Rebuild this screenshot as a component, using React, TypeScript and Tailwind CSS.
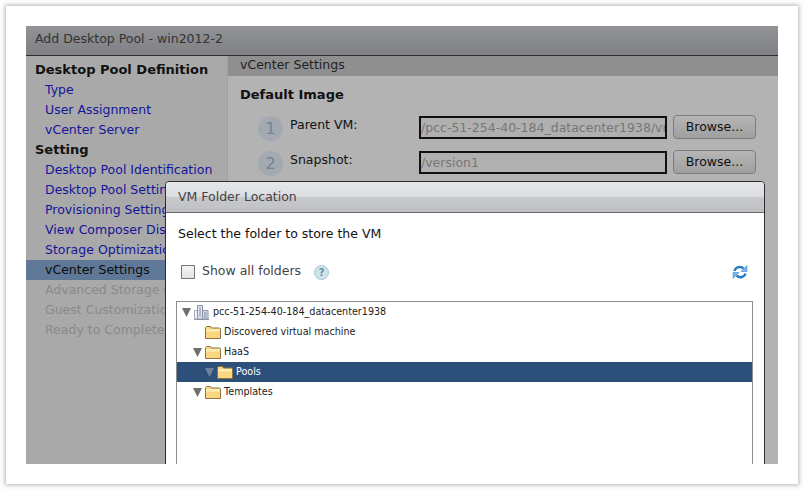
const FONT = "font-['DejaVu_Sans',sans-serif]";

const links = [
	{ label: "Type", kind: "link" },
	{ label: "User Assignment", kind: "link" },
	{ label: "vCenter Server", kind: "link" },
	{ label: "Setting", kind: "head" },
	{ label: "Desktop Pool Identification", kind: "link" },
	{ label: "Desktop Pool Settings", kind: "link" },
	{ label: "Provisioning Settings", kind: "link" },
	{ label: "View Composer Disks", kind: "link" },
	{ label: "Storage Optimization", kind: "link" },
	{ label: "vCenter Settings", kind: "active" },
	{ label: "Advanced Storage Options", kind: "off" },
	{ label: "Guest Customization", kind: "off" },
	{ label: "Ready to Complete", kind: "off" },
];

const Step = ({ n }: { n: number }) => (
	<div className="w-[25px] h-[25px] rounded-full bg-[#a2a9b0] text-[#74818e] text-[16px] flex items-center justify-center shrink-0">
		{n}
	</div>
);

const Field = ({ n, label, value }: { n: number; label: string; value: string }) => (
	<div className="flex items-start h-[25px]">
		<div className="ml-[30px]">
			<Step n={n} />
		</div>
		<div className="ml-[7px] w-[129px] text-[12.5px] text-[#111] leading-[18px] whitespace-nowrap">{label}</div>
		<div className="w-[248px] h-[23px] border-2 border-[#111] bg-[#b0b0b0] text-[12.5px] text-[#777] leading-[20px] overflow-hidden whitespace-nowrap">
			{value}
		</div>
		<button className="ml-[6px] w-[83px] h-[24px] rounded-[4px] border border-[#7c7c7c] bg-gradient-to-b from-[#b6b6b6] to-[#9f9f9f] text-[12.5px] text-[#111] leading-[20px] -mt-[1px]">
			Browse...
		</button>
	</div>
);

const Folder = () => (
	<svg width="16" height="13" viewBox="0 0 16 13" className="shrink-0">
		<path d="M.5 12.500V1.500l1-1h4l1 1.500h8l1 1v9.500z" fill="#fbd67f" stroke="#8a7440" />
		<path d="M1 3h14v2.500H1z" fill="#fdebb8" />
	</svg>
);

const Arrow = ({ dim }: { dim?: boolean }) => (
	<svg width="9" height="9" viewBox="0 0 9 9" className="shrink-0">
		<path d="M0 0h9L4.500 9z" fill={dim ? "#6f8299" : "#6e6e6e"} />
	</svg>
);

const Building = () => (
	<svg width="15" height="15" viewBox="0 0 15 15" className="shrink-0">
		<path d="M0 14.500h15" stroke="#8a94a6" />
		<path d="M.5 14V5.500h3V14z" fill="#eef0f5" stroke="#a3abbb" />
		<path d="M3.500 14V.5h5V14z" fill="#e4e7ef" stroke="#8a94a6" />
		<path d="M8.500 14V5.500h5.500V14z" fill="#d4d8e4" stroke="#8a94a6" />
		<path d="M5 3h2M5 5h2M5 7h2M5 9h2M5 11h2M10 8h2.500M10 10h2.500M10 12h2.500" stroke="#8088a0" />
	</svg>
);

const Refresh = () => (
	<svg width="16" height="16" viewBox="0 0 16 16" fill="none">
		<path d="M2.500 7C3.500 3 8.500 1.500 11.500 4.500" stroke="#2b7bc6" strokeWidth="2.500" />
		<path d="M15 1.500v6H9z" fill="#79b4ea" stroke="#2b7bc6" strokeWidth=".5" />
		<path d="M13.500 9.500C12.500 13 7.500 14.500 4.500 11.500" stroke="#2b7bc6" strokeWidth="2.500" />
		<path d="M1 14.500v-6h6z" fill="#79b4ea" stroke="#2b7bc6" strokeWidth=".5" />
	</svg>
);

const TreeRow = ({ indent, arrow, selected, label, dim }: { indent: number; arrow?: boolean; selected?: boolean; label: string; dim?: boolean }) => (
	<div
		className={`flex items-center h-[20px] text-[9.6px] whitespace-nowrap ${selected ? "bg-[#2c5079] text-white" : "text-[#222]"}`}
		style={{ paddingLeft: indent }}
	>
		<div className="w-[12px] shrink-0">{arrow && <Arrow dim={dim} />}</div>
		<Folder />
		<span className="ml-[3px]">{label}</span>
	</div>
);

export default function App() {
	return (
		<div className={`w-[804px] h-[490px] bg-[#fdfdfd] pt-[6px] pl-[6px] ${FONT}`}>
			<div className="w-[792px] h-[478px] bg-white shadow-[0_0_4px_1px_#b5b5b5] pt-[20px] pl-[20px]">
				<div className="relative w-[752px] h-[438px] overflow-hidden flex flex-col">
					<div className="h-[30px] shrink-0 border-b border-[#2e2e2e] bg-gradient-to-b from-[#929396] to-[#7f8083] pl-[9px] text-[12.5px] text-[#333] leading-[25px]">
						Add Desktop Pool - win2012-2
					</div>
					<div className="flex flex-1 min-h-0">
						<div className="w-[202px] shrink-0 bg-[#a9a9a9] border-r border-[#a0a0a0] pt-[4px] text-[12.5px] leading-[20px]">
							<div className="pl-[9px] text-[13px] font-bold text-[#111]">Desktop Pool Definition</div>
							{links.map((l) => (
								<div
									key={l.label}
									className={`whitespace-nowrap ${
										l.kind === "head"
											? "pl-[9px] text-[13px] font-bold text-[#111]"
											: l.kind === "active"
												? "pl-[19px] bg-[#5f7897] text-[#0d0d0d]"
												: l.kind === "off"
													? "pl-[19px] text-[#8a8a8a]"
													: "pl-[19px] text-[#14149a]"
									}`}
								>
									{l.label}
								</div>
							))}
						</div>
						<div className="flex-1 bg-[#b3b3b3] flex flex-col">
							<div className="h-[20px] shrink-0 bg-[#8f8f8f] pl-[12px] text-[12.5px] text-[#222] leading-[18px]">vCenter Settings</div>
							<div className="pl-[12px] pt-[10px] text-[13px] font-bold text-[#111] leading-[18px]">Default Image</div>
							<div className="mt-[12px] flex flex-col gap-[10px]">
								<Field n={1} label="Parent VM:" value="/pcc-51-254-40-184_datacenter1938/vm" />
								<Field n={2} label="Snapshot:" value="/version1" />
							</div>
						</div>
					</div>

					<div className="absolute left-[139px] top-[155px] w-[600px] h-[300px] bg-white border border-[#2e2e2e] rounded-t-[4px]">
						<div className="h-[31px] border-b border-[#6a6a6a] rounded-t-[4px] bg-[linear-gradient(#e6e7e9_0,#dcdde0_48%,#c8c9cc_50%,#bfc0c3_100%)] pl-[12px] text-[12.5px] text-[#444] leading-[29px]">
							VM Folder Location
						</div>
						<div className="pl-[12px] pt-[12px] text-[12.5px] text-[#111] leading-[18px]">Select the folder to store the VM</div>
						<div className="flex items-center mt-[19px] pl-[15px] pr-[15px] h-[20px]">
							<div className="w-[14px] h-[14px] border border-[#777] bg-gradient-to-b from-[#f4f4f4] to-[#e4e4e4]" />
							<span className="ml-[7px] text-[12.5px] text-[#444] -mt-[2px]">Show all folders</span>
							<div className="ml-[13px] w-[15px] h-[15px] rounded-full bg-[#cfe3ea] border border-[#a8c8d4] text-[#5f8fa3] text-[10px] font-bold leading-[13px] text-center">?</div>
							<div className="ml-auto -mt-[1px] mr-[1px]">
								<Refresh />
							</div>
						</div>
						<div className="mt-[19px] ml-[10px] w-[577px] h-[200px] border border-[#8e8e8e]">
							<div className="flex items-center h-[20px] pl-[5px] text-[9.6px] text-[#222] whitespace-nowrap">
								<Arrow />
								<span className="ml-[3px]">
									<Building />
								</span>
								<span className="ml-[4px]">pcc-51-254-40-184_datacenter1938</span>
							</div>
							<TreeRow indent={16} label="Discovered virtual machine" />
							<TreeRow indent={16} arrow label="HaaS" />
							<TreeRow indent={28} arrow selected dim label="Pools" />
							<TreeRow indent={16} arrow label="Templates" />
						</div>
					</div>
				</div>
			</div>
		</div>
	);
}
